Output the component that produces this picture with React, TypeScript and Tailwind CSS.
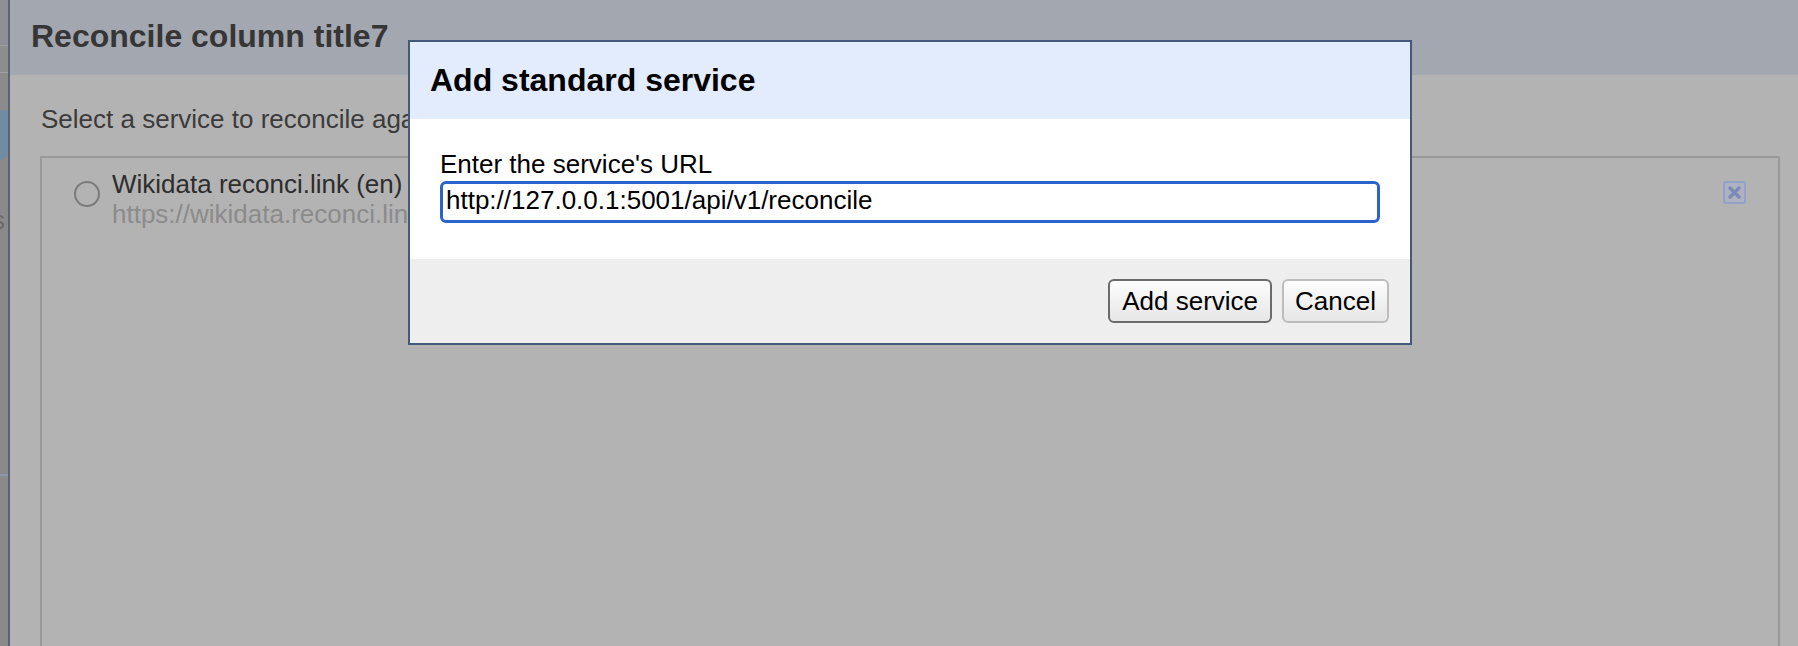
import React from "react";

function CloseIcon() {
  return (
    <div className="w-[23px] h-[23px] rounded-[3px] border-2 border-[#93a0c9] bg-[#aeb2bf] flex items-center justify-center">
      <svg width="15" height="15" viewBox="0 0 15 15">
        <path d="M3 3 L12 12 M12 3 L3 12" stroke="#7a89b8" strokeWidth="3.4" strokeLinecap="round" />
      </svg>
    </div>
  );
}

export default function App() {
  return (
    <div className="relative w-[1798px] h-[646px] overflow-hidden flex bg-[#8a8a8a] font-['Liberation_Sans',Arial,sans-serif]">
      {/* left strip of underlying page */}
      <div className="w-[8px] shrink-0 flex flex-col overflow-hidden">
        <div className="h-[45px] bg-[#8e9096]" />
        <div className="h-[1px] bg-[#9b9ea5]" />
        <div className="h-[26px] bg-[#8d8d8d]" />
        <div className="h-[1px] bg-[#a1a3a9]" />
        <div className="h-[37px] bg-[#8b8b8b]" />
        <div className="h-[50px] bg-[#718ba5] rounded-br-[8px]" />
        <div className="h-[45px] bg-[#8a8a8a]" />
        <div className="h-[30px] bg-[#8a8a8a] text-[26px] leading-[30px] text-[#6b6b6b] -ml-[8px] overflow-hidden whitespace-nowrap">s</div>
        <div className="h-[239px] bg-[#8a8a8a]" />
        <div className="h-[2px] bg-[#8e96a8]" />
        <div className="flex-1 bg-[#8a8a8a]" />
      </div>

      {/* underlying dialog */}
      <div className="flex-1 flex flex-col border-l-2 border-[#5b6372] bg-[#b3b3b3]">
        <div className="h-[75px] shrink-0 bg-[#a3a7b0] pl-[21px] pt-[20px]">
          <div className="text-[32px] leading-[32px] font-bold text-[#363636] whitespace-nowrap">Reconcile column title7</div>
        </div>
        <div className="flex-1 flex flex-col">
          <div className="pl-[31px] pt-[29px] text-[26px] leading-[30px] text-[#3b3b3b] whitespace-nowrap">
            Select a service to reconcile against a reconciliation service
          </div>
          <div className="ml-[30px] mr-[18px] mt-[22px] flex-1 border-2 border-b-0 border-[#999999] flex justify-between">
            <div className="flex pt-[11px]">
              <div className="ml-[32px] mt-[12px] w-[26px] h-[26px] rounded-full border-2 border-[#7b7b7b] shrink-0" />
              <div className="ml-[12px] text-[26px] leading-[30px] whitespace-nowrap">
                <div className="text-[#2d2d2d]">Wikidata reconci.link (en)</div>
                <div className="text-[#8b8b8b]">https://wikidata.reconci.link/en/api</div>
              </div>
            </div>
            <div className="pt-[23px] pr-[32px]">
              <CloseIcon />
            </div>
          </div>
        </div>
      </div>

      {/* modal */}
      <div className="absolute left-[408px] top-[40px] w-[1004px] h-[305px] border-2 border-[#44587a] flex flex-col bg-white">
        <div className="h-[77px] shrink-0 bg-[#e3ecfc] pl-[20px] pt-[20px]">
          <div className="text-[32px] leading-[36px] font-bold text-black">Add standard service</div>
        </div>
        <div className="h-[140px] shrink-0 bg-white px-[30px] pt-[30px]">
          <div className="text-[26px] leading-[30px] text-black">Enter the service's URL</div>
          <input
            readOnly
            value="http://127.0.0.1:5001/api/v1/reconcile"
            className="mt-[2px] w-full h-[42px] border-[3px] border-[#2b63cc] rounded-[6px] px-[3px] pb-[3px] text-[26px] text-black outline-none bg-white font-['Liberation_Sans',Arial,sans-serif]"
          />
        </div>
        <div className="flex-1 bg-[#eeeeee] flex justify-end items-start pt-[20px] pr-[21px] gap-[10px]">
          <button className="h-[44px] px-[12px] border-2 border-[#6a6a6a] rounded-[6px] bg-gradient-to-b from-[#fdfdfd] to-[#e6e6e6] text-[26px] leading-[30px] text-black">
            Add service
          </button>
          <button className="h-[44px] px-[11px] border-2 border-[#bcbcbc] rounded-[6px] bg-gradient-to-b from-[#fdfdfd] to-[#e6e6e6] text-[26px] leading-[30px] text-black">
            Cancel
          </button>
        </div>
      </div>
    </div>
  );
}
